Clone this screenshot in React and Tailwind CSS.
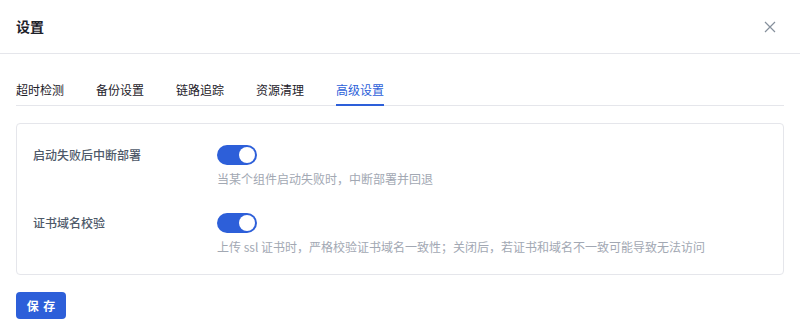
import React from "react";

function Toggle() {
  return (
    <div className="flex h-5 w-10 items-center justify-end rounded-full bg-[#2d5fd9] p-[2px]">
      <div className="h-4 w-4 rounded-full bg-white" />
    </div>
  );
}

function Row({ label, desc }) {
  return (
    <div className="flex">
      <div className="w-[184px] shrink-0 text-[12px] leading-5 font-medium text-[#4e5969]">{label}</div>
      <div className="flex flex-col">
        <Toggle />
        <div className="mt-1 text-[12px] leading-5 text-[#a2a8b3]">{desc}</div>
      </div>
    </div>
  );
}

export default function App() {
  const tabs = ["超时检测", "备份设置", "链路追踪", "资源清理", "高级设置"];
  return (
    <div className="h-[332px] w-[800px] bg-white font-['Noto_Sans_CJK_SC','Noto_Sans',sans-serif]">
      <div className="flex h-[54px] items-center justify-between border-b border-[#e5e6eb] pl-4 pr-[24px]">
        <div className="text-[14px] font-semibold text-[#1d2129]">设置</div>
        <svg width="12" height="12" viewBox="0 0 12 12" className="mt-[1px]">
          <path d="M1 1L11 11M11 1L1 11" stroke="#86909c" strokeWidth="1.2" fill="none" />
        </svg>
      </div>
      <div className="mx-4 mt-[26px] flex gap-8 border-b border-[#e5e6eb]">
        {tabs.map((t, i) => (
          <div
            key={t}
            className={
              "relative pb-[5px] text-[12px] leading-5 " +
              (i === 4 ? "text-[#2d5fd9]" : "text-[#1d2129]")
            }
          >
            {t}
            {i === 4 && <div className="absolute -bottom-px left-0 h-[2px] w-full bg-[#2d5fd9]" />}
          </div>
        ))}
      </div>
      <div className="mx-4 mt-[17px] flex flex-col gap-6 rounded-[4px] border border-[#e5e6eb] px-4 pb-[17px] pt-[21px]">
        <Row label="启动失败后中断部署" desc="当某个组件启动失败时，中断部署并回退" />
        <Row
          label="证书域名校验"
          desc="上传 ssl 证书时，严格校验证书域名一致性；关闭后，若证书和域名不一致可能导致无法访问"
        />
      </div>
      <button className="ml-4 mt-[17px] flex h-[27px] w-[50px] items-center justify-center rounded-[4px] bg-[#2d5fd9] pl-[1px] text-[12px] font-bold tracking-[1px] text-white">
        保 存
      </button>
    </div>
  );
}
